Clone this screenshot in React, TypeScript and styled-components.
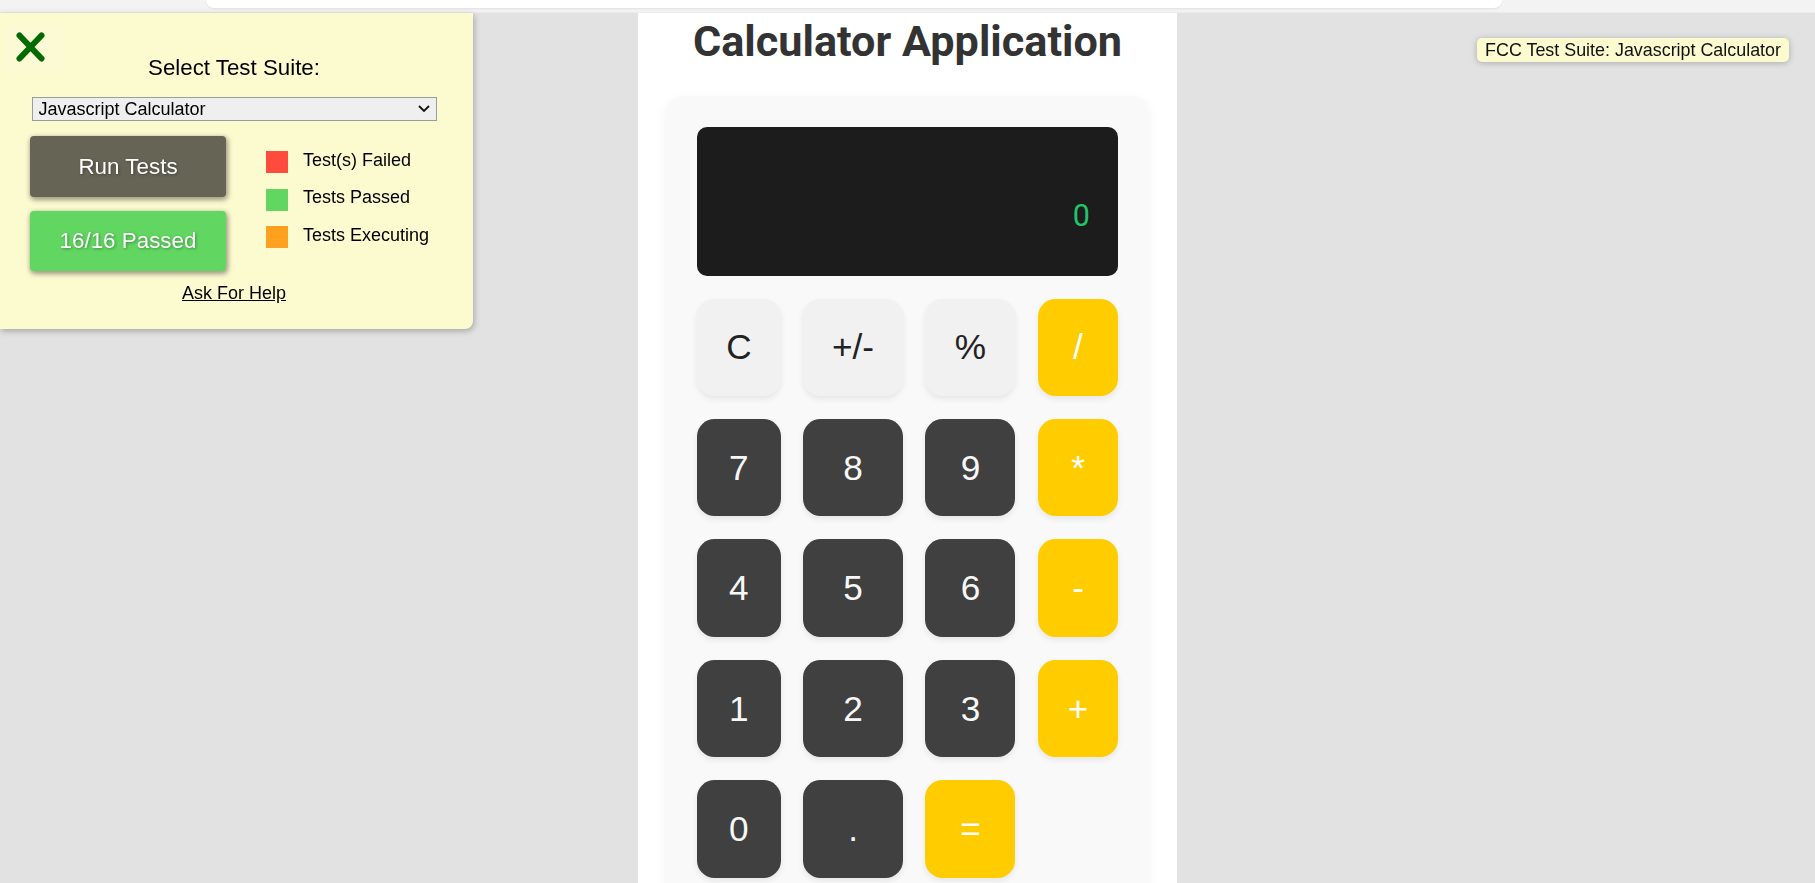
import React from "react";
import styled, { createGlobalStyle, css } from "styled-components";

const GlobalStyle = createGlobalStyle`
  html, body {
    margin: 0;
    padding: 0;
    height: 100%;
    overflow: hidden;
    background: #e2e2e2;
  }
  body {
    font-family: "Liberation Sans", Arial, sans-serif;
  }
  #root {
    height: 100%;
  }
  * {
    box-sizing: border-box;
  }
`;

const Page = styled.div`
  display: flex;
  flex-direction: column;
  height: 100vh;
`;

const BrowserStrip = styled.div`
  flex: none;
  height: 13px;
  background: #f3f3f3;
  border-bottom: 1px solid #ebebeb;
  padding-left: 206px;
`;

const StripTab = styled.div`
  width: 1296px;
  height: 8px;
  background: #ffffff;
  border-radius: 0 0 16px 16px;
  box-shadow: 0 1px 2px rgba(0, 0, 0, 0.08);
`;

const Stage = styled.main`
  flex: 1;
  min-height: 0;
  display: flex;
  justify-content: center;
`;

const Column = styled.section`
  width: 539px;
  background: #ffffff;
  padding: 0 29px;
  display: flex;
  flex-direction: column;
  overflow: hidden;
`;

const Title = styled.h1`
  margin: 3px 0 0;
  font-family: Roboto, "Liberation Sans", sans-serif;
  font-weight: 700;
  font-size: 43.2px;
  line-height: 51.6px;
  color: #333333;
  text-align: center;
`;

const Calculator = styled.div`
  margin-top: 28px;
  flex: none;
  background: #f9f9f9;
  border-radius: 16px;
  padding: 31px 30px;
  box-shadow: 0 4px 14px rgba(0, 0, 0, 0.06);
  display: flex;
  flex-direction: column;
  gap: 22.6px;
`;

const Display = styled.div`
  height: 149.5px;
  background: #1c1c1c;
  border-radius: 10px;
  padding: 20px 28px 43px;
  display: flex;
  flex-direction: column;
  justify-content: flex-end;
  align-items: flex-end;
`;

const Output = styled.div`
  font-family: Roboto, "Liberation Sans", sans-serif;
  font-size: 30.5px;
  line-height: normal;
  color: #22c46b;
`;

const Keypad = styled.div`
  display: grid;
  grid-template-columns: 83.7px 99.4px 90px 79.7px;
  grid-auto-rows: 97.4px;
  column-gap: 22.7px;
  row-gap: 23px;
`;

type KeyVariant = "fn" | "num" | "op";

const Key = styled.button<{ $variant: KeyVariant }>`
  border: none;
  border-radius: 17.6px;
  font-family: "Liberation Sans", Arial, sans-serif;
  font-size: 35.2px;
  padding: 0;
  display: flex;
  align-items: center;
  justify-content: center;
  box-shadow: 0 3px 6px rgba(0, 0, 0, 0.08);
  cursor: pointer;
  ${({ $variant }) =>
    $variant === "fn"
      ? css`
          background: #f1f1f1;
          color: #222222;
        `
      : $variant === "num"
      ? css`
          background: #404040;
          color: #f7f7f7;
        `
      : css`
          background: #ffcc00;
          color: #ffffff;
        `}
`;

/* ---------- FCC test panel ---------- */

const TestPanel = styled.aside`
  position: fixed;
  top: 13px;
  left: 0;
  width: 473px;
  background: #fcfacf;
  border-radius: 0 0 8px 0;
  box-shadow: 1px 2px 6px rgba(0, 0, 0, 0.28);
  padding: 42px 5px 25px 0;
  display: flex;
  flex-direction: column;
  align-items: center;
  color: #000000;
  font-family: "Liberation Sans", Arial, sans-serif;
`;

const CloseButton = styled.button`
  position: absolute;
  top: 12px;
  left: 5px;
  width: 60px;
  height: 45px;
  border: none;
  background: rgba(255, 255, 255, 0.14);
  padding: 7px 0 0 11px;
  display: flex;
  align-items: flex-start;
  justify-content: flex-start;
  cursor: pointer;
`;

const SuiteLabel = styled.div`
  font-size: 22.3px;
  line-height: normal;
`;

const SelectWrap = styled.div`
  position: relative;
  margin-top: 16px;
  width: 405px;
  height: 24px;
`;

const SuiteSelect = styled.select`
  appearance: none;
  -webkit-appearance: none;
  width: 100%;
  height: 100%;
  margin: 0;
  border: 1px solid #9c9c9c;
  border-radius: 0;
  background: #efefef;
  color: #000000;
  font-family: "Liberation Sans", Arial, sans-serif;
  font-size: 18px;
  padding: 0 0 0 6px;
`;

const Chevron = styled.svg`
  position: absolute;
  top: 8px;
  right: 7px;
  pointer-events: none;
`;

const ControlRow = styled.div`
  margin-top: 15px;
  align-self: stretch;
  padding-left: 30px;
  display: flex;
  gap: 40px;
`;

const ButtonStack = styled.div`
  width: 196px;
  display: flex;
  flex-direction: column;
  gap: 14px;
`;

const PanelButton = styled.button<{ $tone: "run" | "pass" }>`
  height: ${({ $tone }) => ($tone === "run" ? "61px" : "60px")};
  border: none;
  border-radius: 4px;
  color: #ffffff;
  font-family: "Liberation Sans", Arial, sans-serif;
  font-size: 22.4px;
  text-shadow: 1px 1px 3px rgba(0, 0, 0, 0.35);
  box-shadow: 1px 2px 5px 1px rgba(0, 0, 0, 0.38);
  background: ${({ $tone }) => ($tone === "run" ? "#656455" : "#61d661")};
  cursor: pointer;
`;

const Legend = styled.ul`
  list-style: none;
  margin: 0;
  padding: 15px 0 0;
  display: flex;
  flex-direction: column;
  gap: 15.5px;
`;

const LegendItem = styled.li`
  display: flex;
  align-items: flex-start;
  gap: 15px;
  font-size: 18px;
  line-height: normal;
`;

const Swatch = styled.span<{ $color: string }>`
  width: 22px;
  height: 22px;
  flex: none;
  background: ${({ $color }) => $color};
`;

const LegendText = styled.span`
  margin-top: -1.5px;
`;

const HelpLink = styled.a`
  margin-top: 12px;
  font-size: 18px;
  line-height: normal;
  color: #000000;
  text-decoration: underline;
  cursor: pointer;
`;

const SuiteBadge = styled.div`
  position: fixed;
  top: 38px;
  right: 26px;
  height: 24px;
  padding: 0 8px;
  background: #fcfacf;
  border-radius: 5px;
  box-shadow: 0 1px 6px rgba(0, 0, 0, 0.25);
  font-family: "Liberation Sans", Arial, sans-serif;
  font-size: 17.9px;
  line-height: 24px;
  color: #111111;
  white-space: nowrap;
`;

const keys: { label: string; variant: KeyVariant }[] = [
  { label: "C", variant: "fn" },
  { label: "+/-", variant: "fn" },
  { label: "%", variant: "fn" },
  { label: "/", variant: "op" },
  { label: "7", variant: "num" },
  { label: "8", variant: "num" },
  { label: "9", variant: "num" },
  { label: "*", variant: "op" },
  { label: "4", variant: "num" },
  { label: "5", variant: "num" },
  { label: "6", variant: "num" },
  { label: "-", variant: "op" },
  { label: "1", variant: "num" },
  { label: "2", variant: "num" },
  { label: "3", variant: "num" },
  { label: "+", variant: "op" },
  { label: "0", variant: "num" },
  { label: ".", variant: "num" },
  { label: "=", variant: "op" },
];

const legend = [
  { color: "#ff4b3e", text: "Test(s) Failed" },
  { color: "#61d661", text: "Tests Passed" },
  { color: "#ffa11f", text: "Tests Executing" },
];

export default function App() {
  return (
    <>
      <GlobalStyle />
      <Page>
        <BrowserStrip>
          <StripTab />
        </BrowserStrip>
        <Stage>
          <Column>
            <Title>Calculator Application</Title>
            <Calculator>
              <Display>
                <Output>0</Output>
              </Display>
              <Keypad>
                {keys.map((k) => (
                  <Key key={k.label} $variant={k.variant}>
                    {k.label}
                  </Key>
                ))}
              </Keypad>
            </Calculator>
          </Column>
        </Stage>
      </Page>

      <TestPanel>
        <CloseButton aria-label="close">
          <svg width="29" height="30" viewBox="0 0 29 30">
            <path
              d="M3.5 3.5 L25.5 26.5 M25.5 3.5 L3.5 26.5"
              stroke="#016a01"
              strokeWidth="6"
              strokeLinecap="round"
              fill="none"
            />
          </svg>
        </CloseButton>
        <SuiteLabel>Select Test Suite:</SuiteLabel>
        <SelectWrap>
          <SuiteSelect defaultValue="calc">
            <option value="calc">Javascript Calculator</option>
          </SuiteSelect>
          <Chevron width="12" height="8" viewBox="0 0 12 8">
            <path d="M1 1 L6 6 L11 1" stroke="#111" strokeWidth="1.8" fill="none" />
          </Chevron>
        </SelectWrap>
        <ControlRow>
          <ButtonStack>
            <PanelButton $tone="run">Run Tests</PanelButton>
            <PanelButton $tone="pass">16/16 Passed</PanelButton>
          </ButtonStack>
          <Legend>
            {legend.map((l) => (
              <LegendItem key={l.text}>
                <Swatch $color={l.color} />
                <LegendText>{l.text}</LegendText>
              </LegendItem>
            ))}
          </Legend>
        </ControlRow>
        <HelpLink>Ask For Help</HelpLink>
      </TestPanel>

      <SuiteBadge>FCC Test Suite: Javascript Calculator</SuiteBadge>
    </>
  );
}
